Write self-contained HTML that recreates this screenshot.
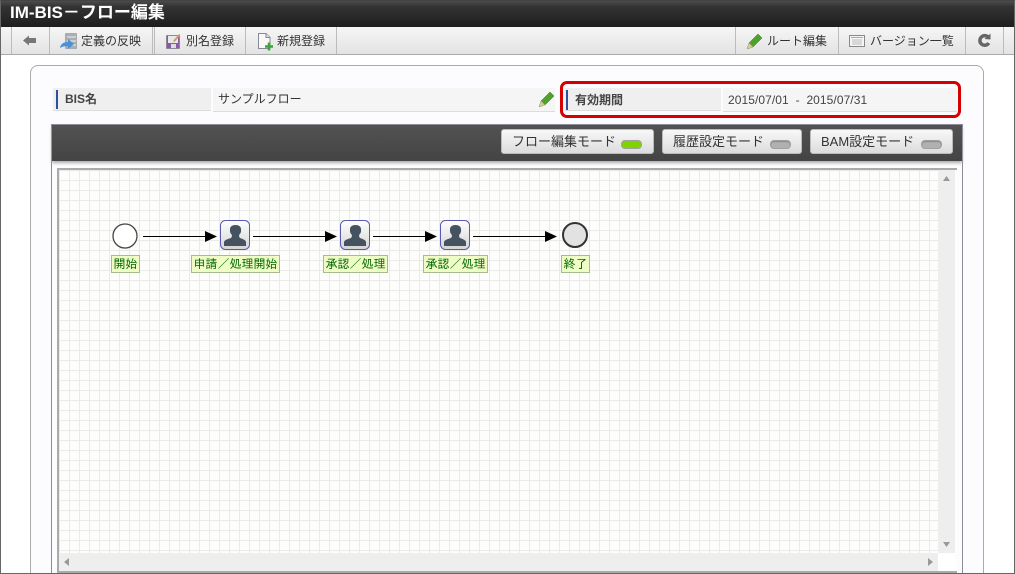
<!DOCTYPE html>
<html lang="ja"><head><meta charset="utf-8"><title>IM-BIS</title>
<style>
html,body{margin:0;padding:0;background:#fff}
#r{position:relative;width:1015px;height:574px;overflow:hidden;background:#fff;font-family:"Liberation Sans","Noto Sans CJK JP",sans-serif;color:#333}
#r div{position:absolute;box-sizing:border-box}
.t{white-space:nowrap;font-size:12px;line-height:16px}
.s{width:1px;top:27px;height:27px;background:#bbb}
.b{border-radius:3px;background:linear-gradient(#f8f8f8,#dcdcdc);border:1px solid #bbb;top:129px;height:25px}
.m{border-radius:4px;top:140px;height:9px;width:21px;border:1px solid #a0a0a0;background:#b0b0b0;box-shadow:inset 0 1px 1px #888}
.l{height:18px;background:#effcc6;border:1px solid #a8bb90;font:12px/16px "IPAGothic","Noto Sans CJK JP",sans-serif;color:#060;text-align:center;white-space:nowrap}
</style></head><body>
<div id="r">
<div style="left:0;top:0;width:1015px;height:27px;background:linear-gradient(#505050,#333 25%,#1e1e1e)"></div>
<div class="t" style="left:10px;top:2px;font-size:17px;line-height:22px;font-weight:bold;color:#fff">IM-BIS－フロー編集</div>
<div style="left:0;top:27px;width:1015px;height:28px;background:linear-gradient(#f6f6f6,#e3e3e3);border-bottom:1px solid #aaa"></div>
<div class="s" style="left:11px"></div><div class="s" style="left:49px"></div><div class="s" style="left:152px"></div><div class="s" style="left:154px"></div><div class="s" style="left:245px"></div><div class="s" style="left:336px"></div><div class="s" style="left:735px"></div><div class="s" style="left:838px"></div><div class="s" style="left:965px"></div><div class="s" style="left:1003px"></div>
<svg style="position:absolute;left:0;top:27px" width="1015" height="27">
<path d="M23 13.500 L29 8.500 V11 H36 V16 H29 V18.500 Z" fill="#777"/>
<rect x="65.500" y="6.500" width="11" height="15" fill="#a9aeb0" stroke="#888" stroke-width=".5"/><path d="M67 10H76M67 14H76M67 18H76" stroke="#eee"/><path d="M60 21 Q61 15 68 15 V12 L74 17 L68 22 V19 Q63 19 60 21Z" fill="#4a90d9"/>
<rect x="166.500" y="8.500" width="13" height="13" fill="#8a5aa8" stroke="#666" stroke-width=".5"/><rect x="168" y="9" width="10" height="7" fill="#e8e8e8"/><rect x="171" y="17" width="5" height="4" fill="#ddd"/><path d="M173 14 L179 7 L180.500 8 L174.500 15Z" fill="#c96"/>
<path d="M258.500 6.500 H266 L270 10.500 V21.500 H258.500 Z" fill="#f8f8f8" stroke="#889"/><path d="M266 6.500 V10.500 H270" fill="#ddd" stroke="#889"/><path d="M265 19.500H273 M269 15.500V23.500" stroke="#3aa53a" stroke-width="2.500"/>
<path d="M747 22 L749 16 L758 7 L762 11 L753 20 Z" fill="#4fa02c" stroke="#3c7a20" stroke-width=".5"/><path d="M747 22 L749 16 L753 20Z" fill="#d8c8a0"/>
<rect x="849.500" y="8.500" width="15" height="11" fill="#f6f6f6" stroke="#888"/><path d="M851 10.500H863" stroke="#aaa"/><path d="M852 13H862M852 15H862M852 17H862" stroke="#bbb"/>
<path d="M988.500 10.500 A4.800 4.800 0 1 0 988.800 16" fill="none" stroke="#666" stroke-width="3.500"/><path d="M984.500 12 L990.500 6.500 L990.500 12.500Z" fill="#666"/>
</svg>
<div class="t" style="left:81px;top:33px">定義の反映</div>
<div class="t" style="left:186px;top:33px">別名登録</div>
<div class="t" style="left:277px;top:33px">新規登録</div>
<div class="t" style="left:767px;top:33px">ルート編集</div>
<div class="t" style="left:870px;top:33px">バージョン一覧</div>

<div style="left:30px;top:65px;width:954px;height:530px;border:1px solid #aaa;border-radius:8px;background:#fcfcff"></div>

<div style="left:53px;top:88px;width:158px;height:22px;background:#efefef"></div>
<div style="left:53px;top:110px;width:158px;height:1px;background:#ddd"></div>
<div style="left:56px;top:90px;width:2px;height:19px;background:#2f4f9f"></div>
<div class="t" style="left:65px;top:91px;font-weight:bold;color:#444">BIS名</div>
<div style="left:213px;top:88px;width:342px;height:24px;background:#f5f5f5;border-bottom:1px solid #ddd"></div>
<div class="t" style="left:218px;top:91px;color:#333">サンプルフロー</div>
<svg style="position:absolute;left:538px;top:91px" width="18" height="18"><path d="M1 16 L3 10 L12 1 L16 5 L7 14 Z" fill="#4fa02c" stroke="#3c7a20" stroke-width=".5"/><path d="M1 16 L3 10 L7 14Z" fill="#d8c8a0"/></svg>

<div style="left:565px;top:88px;width:156px;height:22px;background:#efefef"></div>
<div style="left:565px;top:110px;width:156px;height:1px;background:#ddd"></div>
<div style="left:566px;top:90px;width:2px;height:20px;background:#2f4f9f"></div>
<div class="t" style="left:575px;top:92px;font-weight:bold;color:#444">有効期間</div>
<div style="left:723px;top:88px;width:234px;height:24px;background:#f5f5f5;border-bottom:1px solid #ddd"></div>
<div class="t" style="left:728px;top:92px;color:#444;letter-spacing:.07px">2015/07/01 &nbsp;-&nbsp; 2015/07/31</div>
<div style="left:560px;top:81px;width:401px;height:37px;border:3px solid #d60000;border-radius:7px"></div>

<div style="left:51px;top:124px;width:912px;height:460px;border:1px solid #8a8a9e;background:#fcfcff"></div>
<div style="left:52px;top:125px;width:910px;height:36px;background:linear-gradient(#525252,#444);box-shadow:0 2px 3px #aaa"></div>

<div class="b" style="left:501px;width:153px"></div>
<div class="t" style="left:512px;top:134px;font-size:13px">フロー編集モード</div>
<div class="m" style="left:621px;background:#7fd400;box-shadow:none"></div>
<div class="b" style="left:662px;width:140px"></div>
<div class="t" style="left:673px;top:134px;font-size:13px">履歴設定モード</div>
<div class="m" style="left:770px"></div>
<div class="b" style="left:810px;width:143px"></div>
<div class="t" style="left:821px;top:134px;font-size:13px">BAM設定モード</div>
<div class="m" style="left:921px"></div>

<div style="left:57px;top:168px;width:900px;height:405px;border-top:2px solid #aaa;border-left:2px solid #aaa;background-color:#fdfdfb;background-image:linear-gradient(90deg,#eaeae8 1px,transparent 1px),linear-gradient(#eaeae8 1px,transparent 1px);background-size:10px 10px;background-position:0px 0px"></div>
<div style="left:938px;top:170px;width:17px;height:383px;background:#eee"></div>
<div style="left:59px;top:553px;width:879px;height:18px;background:#eee"></div>
<div style="left:938px;top:553px;width:17px;height:18px;background:#fff"></div>
<div style="left:955px;top:170px;width:2px;height:401px;background:#fdfdfb"></div>
<div style="left:57px;top:571px;width:900px;height:2px;background:#aaa"></div>
<svg style="position:absolute;left:0;top:0" width="1015" height="574">
<path d="M943 181 L950 181 L946.500 176Z M943 542 L950 542 L946.500 547Z M69 558 L69 566 L64 562Z M928 558 L928 566 L933 562Z" fill="#999"/>
<circle cx="125" cy="236" r="12" fill="#fff" stroke="#444" stroke-width="1.300"/>
<circle cx="575" cy="235" r="12" fill="#e2e2e2" stroke="#333" stroke-width="2"/>
<path d="M143 236.500H205M253 236.500H325M373 236.500H425M473 236.500H545" stroke="#000"/>
<path d="M205 231V242L217 236.500Z M325 231V242L337 236.500Z M425 231V242L437 236.500Z M545 231V242L557 236.500Z" fill="#000"/>
<defs><linearGradient id="g" x1="0" y1="0" x2="0" y2="1"><stop offset="0" stop-color="#fff"/><stop offset="1" stop-color="#d4d4d4"/></linearGradient></defs>
<g><rect x="220.500" y="220.500" width="29" height="29" rx="5" fill="url(#g)" stroke="#5a5ab0"/><path d="M224 246 V242 Q224 240 231 238 Q232 237 232 235 Q229.500 233 230 229 Q230.500 225 235.500 225 Q240.500 225 241 229 Q241.500 233 239 235 Q239 237 240 238 Q246 240 246 242 V246Z" fill="#45525f"/></g>
<g transform="translate(120,0)"><rect x="220.500" y="220.500" width="29" height="29" rx="5" fill="url(#g)" stroke="#5a5ab0"/><path d="M224 246 V242 Q224 240 231 238 Q232 237 232 235 Q229.500 233 230 229 Q230.500 225 235.500 225 Q240.500 225 241 229 Q241.500 233 239 235 Q239 237 240 238 Q246 240 246 242 V246Z" fill="#45525f"/></g>
<g transform="translate(220,0)"><rect x="220.500" y="220.500" width="29" height="29" rx="5" fill="url(#g)" stroke="#5a5ab0"/><path d="M224 246 V242 Q224 240 231 238 Q232 237 232 235 Q229.500 233 230 229 Q230.500 225 235.500 225 Q240.500 225 241 229 Q241.500 233 239 235 Q239 237 240 238 Q246 240 246 242 V246Z" fill="#45525f"/></g>
</svg>
<div class="l" style="left:111px;top:255px;width:29px">開始</div>
<div class="l" style="left:191px;top:255px;width:89px">申請／処理開始</div>
<div class="l" style="left:323px;top:255px;width:65px">承認／処理</div>
<div class="l" style="left:423px;top:255px;width:65px">承認／処理</div>
<div class="l" style="left:561px;top:255px;width:29px">終了</div>
<div style="left:0;top:0;width:1015px;height:574px;border:1px solid #666;border-top-color:#444"></div>
</div>
</body></html>
